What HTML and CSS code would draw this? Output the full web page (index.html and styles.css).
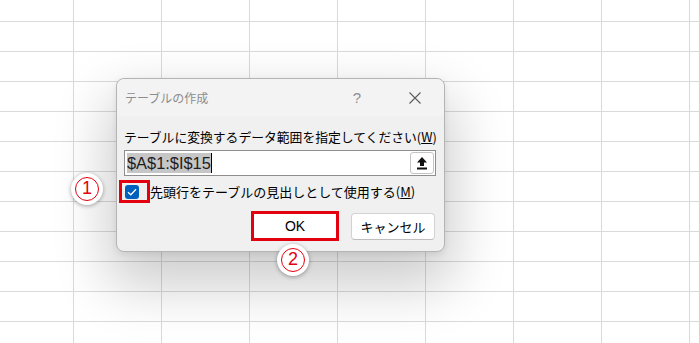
FILE: index.html
```html
<!DOCTYPE html>
<html>
<head>
<meta charset="UTF-8">
<title>テーブルの作成</title>
<link rel="stylesheet" href="styles.css">
</head>
<body>
<div class="sheet">
	<div class="dialog">
		<div class="titlebar">
			<span class="title">テーブルの作成</span>
			<span class="caption-btn help">?</span>
			<span class="caption-btn close">
				<svg width="12" height="12" viewBox="0 0 12 12"><path d="M0.5 0.5 L11.5 11.5 M11.5 0.5 L0.5 11.5" stroke="#5c5c5c" stroke-width="1.1" fill="none"/></svg>
			</span>
		</div>
		<div class="content">
			<div class="prompt">テーブルに変換するデータ範囲を指定してください(<u>W</u>)</div>
			<div class="range">
				<span class="range-sel">$A$1:$I$15</span><span class="caret"></span>
				<span class="collapse-btn">
					<svg width="10" height="13" viewBox="0 0 10 13"><path d="M5 0 L10 5.5 H7 V9 H3 V5.5 H0 Z" fill="#111"/><rect x="0" y="10.5" width="10" height="2" fill="#111"/></svg>
				</span>
			</div>
			<div class="check-row">
				<span class="mark-box check-mark">
					<span class="checkbox">
						<svg width="10" height="8" viewBox="0 0 10 8"><polyline points="1,4.2 3.8,6.8 9,1.2" stroke="#fff" stroke-width="1.3" fill="none"/></svg>
					</span>
				</span>
				<span class="check-label">先頭行をテーブルの見出しとして使用する(<u>M</u>)</span>
			</div>
			<div class="buttons">
				<span class="mark-box ok-mark"><span class="btn ok">OK</span></span>
				<span class="btn cancel">キャンセル</span>
			</div>
		</div>
	</div>
	<span class="badge badge-1"><span class="ring">1</span></span>
	<span class="badge badge-2"><span class="ring">2</span></span>
</div>
</body>
</html>
```

FILE: styles.css
```css
body
{
	margin: 0;
	padding: 0;
	font-family: "Noto Sans CJK JP", "Noto Sans", sans-serif;
	color: #000;
}

.sheet
{
	position: relative;
	width: 699px;
	height: 343px;
	overflow: hidden;
	background-color: #fff;
	background-image:
		linear-gradient(to right, #dadada 1px, transparent 1px),
		linear-gradient(to bottom, #dadada 1px, transparent 1px);
	background-size: 88px 30px;
	background-position: 73px 21px;
}

/* the dialog window sits over the sheet */
.dialog
{
	position: absolute;
	left: 116px;
	top: 78px;
	width: 329px;
	height: 174px;
	box-sizing: border-box;
	border: 1px solid #b4b4b4;
	border-radius: 8px;
	background: #f0f0f0;
	box-shadow: 0 26px 55px 8px rgba(0,0,0,0.2), 0 2px 6px rgba(0,0,0,0.08);
}

.titlebar
{
	display: flex;
	align-items: center;
	height: 37px;
	padding-left: 8px;
	background: #f3f3f3;
	border-radius: 8px 8px 0 0;
}

.title
{
	flex: 1;
	font-size: 12px;
	color: #8c8c8c;
	line-height: 16px;
}

.caption-btn
{
	width: 58px;
	display: flex;
	justify-content: center;
	align-items: center;
}

.help
{
	font-family: "Liberation Sans", sans-serif;
	font-size: 15px;
	color: #8f8f8f;
}

.close
{
	padding-top: 1px;
}

.content
{
	padding: 0 8px 0 7px;
}

.prompt
{
	margin-top: 12px;
	font-size: 12.8px;
	line-height: 18px;
	white-space: nowrap;
}

.range
{
	display: flex;
	align-items: center;
	height: 26px;
	margin-top: 4px;
	box-sizing: border-box;
	border: 1px solid #8e8e8e;
	background: #fff;
	padding-left: 2px;
}

.range-sel
{
	font-family: "Liberation Sans", sans-serif;
	font-size: 16.4px;
	line-height: 20px;
	background: #c6c6c6;
	color: #1e1e1e;
}

.caret
{
	width: 1px;
	height: 20px;
	background: #000;
}

.collapse-btn
{
	margin-left: auto;
	margin-right: 1px;
	width: 24px;
	height: 22px;
	box-sizing: border-box;
	border: 1px solid #c4c4c4;
	border-radius: 3px;
	background: #fff;
	display: flex;
	justify-content: center;
	align-items: center;
}

.check-row
{
	display: flex;
	align-items: center;
	margin-top: 4px;
	margin-left: -5px;
}

/* red annotation frames */
.mark-box
{
	display: inline-flex;
	border: 3px solid #e3000f;
}

.check-mark
{
	padding: 2px 8px 1px 3px;
}

.checkbox
{
	width: 14px;
	height: 14px;
	border-radius: 3px;
	background: #0060bd;
	display: flex;
	justify-content: center;
	align-items: center;
}

.check-label
{
	font-size: 13px;
	line-height: 18px;
	white-space: nowrap;
}

.buttons
{
	display: flex;
	justify-content: flex-end;
	align-items: center;
	gap: 12px;
	margin-top: 8px;
	margin-right: 1px;
}

.btn
{
	display: flex;
	justify-content: center;
	align-items: center;
	box-sizing: border-box;
	background: #fff;
	font-size: 13px;
}

.ok
{
	width: 82px;
	height: 24px;
	font-family: "Liberation Sans", sans-serif;
	font-size: 14px;
}

.cancel
{
	width: 84px;
	height: 27px;
	border: 1px solid #d2d2d2;
	border-bottom-color: #bdbdbd;
	border-radius: 4px;
}

/* numbered callouts */
.badge
{
	position: absolute;
	width: 32px;
	height: 32px;
	border-radius: 50%;
	background: #fff;
	box-shadow: 0 1px 4px rgba(0,0,0,0.35);
	display: flex;
	justify-content: center;
	align-items: center;
}

.badge-1
{
	left: 71px;
	top: 173px;
}

.badge-2
{
	left: 277px;
	top: 244px;
}

.ring
{
	width: 24px;
	height: 24px;
	box-sizing: border-box;
	border: 1.8px solid #e3000f;
	border-radius: 50%;
	color: #e3000f;
	font-family: "Liberation Sans", sans-serif;
	font-size: 18px;
	line-height: 21px;
	text-align: center;
}
```
